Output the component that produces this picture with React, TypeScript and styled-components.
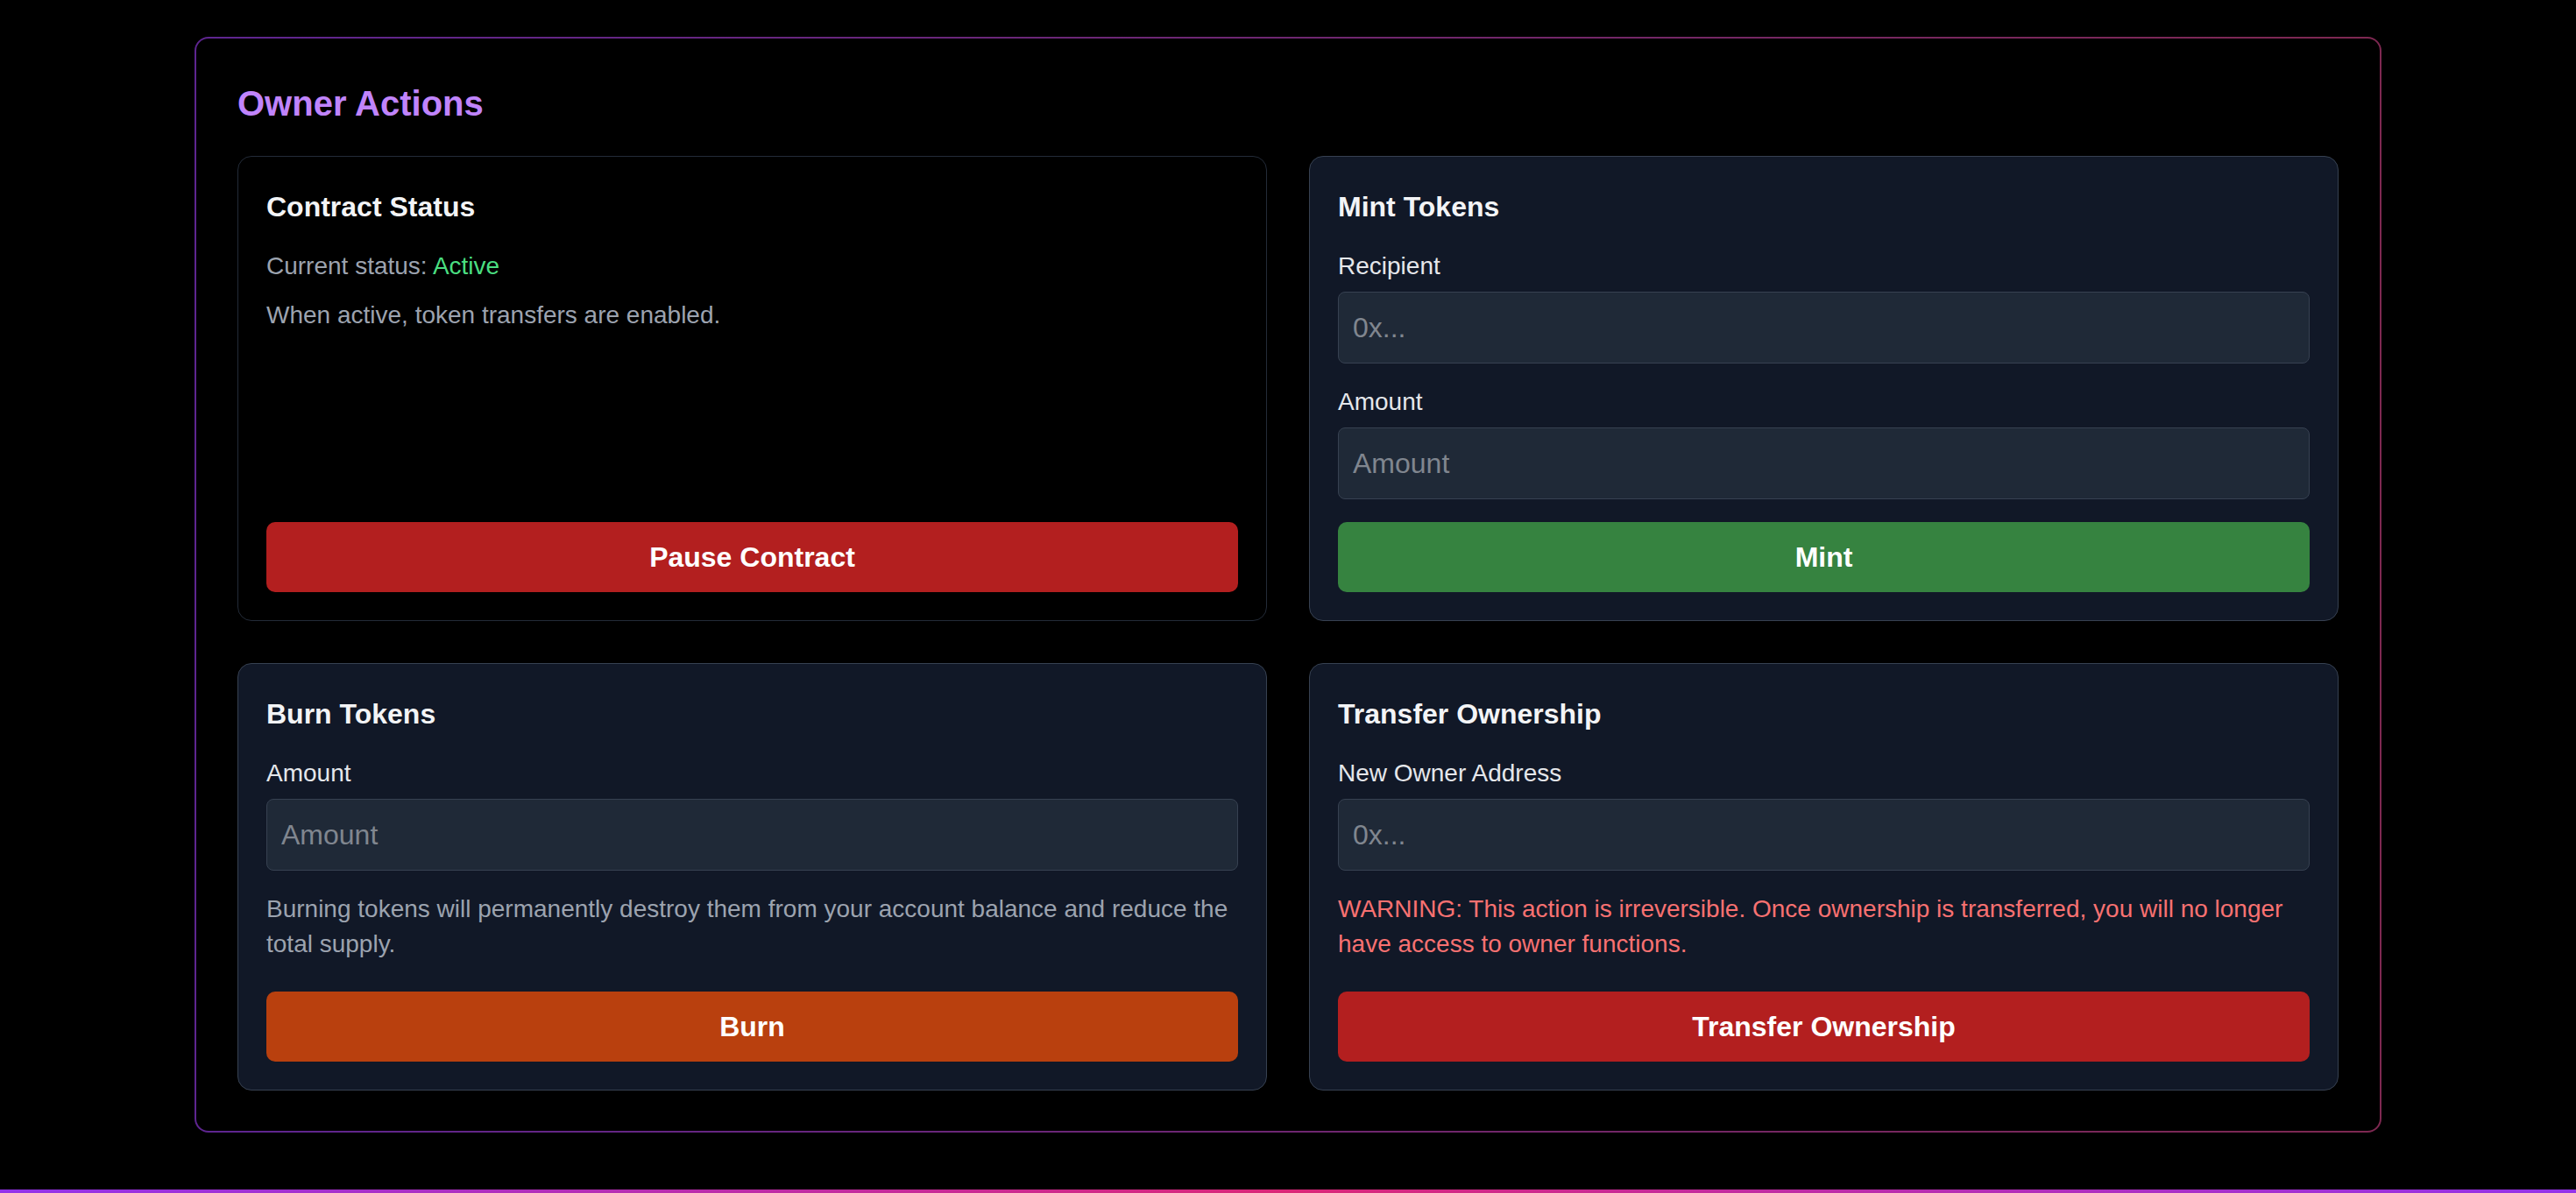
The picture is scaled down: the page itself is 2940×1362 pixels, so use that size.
import React from "react";
import styled, { createGlobalStyle } from "styled-components";

const GlobalStyle = createGlobalStyle`
  html, body {
    margin: 0;
    padding: 0;
    background: #000000;
  }
  body {
    font-family: "Liberation Sans", Arial, Helvetica, sans-serif;
    color: #f3f4f6;
  }
  * { box-sizing: border-box; }
`;

const Page = styled.div`
  min-height: 100vh;
  display: flex;
  flex-direction: column;
  background: #000000;
`;

const Main = styled.main`
  flex: 1;
  width: 100%;
  max-width: 2560px;
  margin: 0 auto;
  padding: 42px 32px 0;
`;

const Panel = styled.section`
  border: 2px solid transparent;
  border-radius: 16px;
  background:
    linear-gradient(#000000, #000000) padding-box,
    linear-gradient(to right, #5e2590, #7e2851) border-box;
  padding: 46px 47px 46px 47px;
`;

const PanelTitle = styled.h2`
  margin: 0 0 32px;
  font-size: 40px;
  line-height: 56px;
  font-weight: 700;
  color: #c084fc;
`;

const Grid = styled.div`
  display: grid;
  grid-template-columns: 1fr 1fr;
  gap: 48px;
`;

const Card = styled.div<{ $dark?: boolean }>`
  display: flex;
  flex-direction: column;
  border: 1px solid ${(p) => (p.$dark ? "#232b38" : "#374151")};
  background: ${(p) => (p.$dark ? "#000000" : "#111827")};
  border-radius: 16px;
  padding: 33px 32px 32px;
`;

const CardTitle = styled.h3`
  margin: 0 0 24px;
  font-size: 32px;
  line-height: 48px;
  font-weight: 700;
  color: #f3f4f6;
`;

const Text = styled.p<{ $tone?: "muted" | "warning"; $mb?: number }>`
  margin: 0 0 ${(p) => p.$mb ?? 0}px;
  font-size: 28px;
  line-height: 40px;
  color: ${(p) => (p.$tone === "warning" ? "#f87171" : "#9ca3af")};
`;

const Status = styled.span`
  color: #4ade80;
`;

const Field = styled.div`
  display: flex;
  flex-direction: column;
  margin-bottom: 24px;
`;

const Label = styled.label`
  font-size: 28px;
  line-height: 40px;
  color: #e5e7eb;
  margin-bottom: 9px;
`;

const Input = styled.input`
  width: 100%;
  height: 82px;
  padding: 0 16px;
  border: 1px solid #374151;
  border-radius: 8px;
  background: #1f2937;
  color: #ffffff;
  font-family: inherit;
  font-size: 32px;
  outline: none;
  &::placeholder {
    color: #80868f;
  }
`;

const Actions = styled.div`
  margin-top: auto;
  padding-top: 2px;
`;

const Button = styled.button<{ $color: string }>`
  display: block;
  width: 100%;
  height: 80px;
  border: none;
  border-radius: 10px;
  background: ${(p) => p.$color};
  color: #ffffff;
  font-family: inherit;
  font-size: 32px;
  font-weight: 700;
  cursor: pointer;
`;

const BottomBar = styled.div`
  height: 4px;
  flex-shrink: 0;
  background: linear-gradient(to right, #9333ea, #db2777, #9333ea);
`;

export default function App() {
  return (
    <Page>
      <GlobalStyle />
      <Main>
        <Panel>
          <PanelTitle>Owner Actions</PanelTitle>
          <Grid>
            <Card $dark>
              <CardTitle>Contract Status</CardTitle>
              <Text $mb={16}>
                Current status: <Status>Active</Status>
              </Text>
              <Text>When active, token transfers are enabled.</Text>
              <Actions>
                <Button $color="#b31f1f">Pause Contract</Button>
              </Actions>
            </Card>

            <Card>
              <CardTitle>Mint Tokens</CardTitle>
              <Field>
                <Label>Recipient</Label>
                <Input placeholder="0x..." />
              </Field>
              <Field>
                <Label>Amount</Label>
                <Input placeholder="Amount" />
              </Field>
              <Actions>
                <Button $color="#368340">Mint</Button>
              </Actions>
            </Card>

            <Card>
              <CardTitle>Burn Tokens</CardTitle>
              <Field>
                <Label>Amount</Label>
                <Input placeholder="Amount" />
              </Field>
              <Text $mb={32}>
                Burning tokens will permanently destroy them from your account balance and reduce the total supply.
              </Text>
              <Actions>
                <Button $color="#b9400e">Burn</Button>
              </Actions>
            </Card>

            <Card>
              <CardTitle>Transfer Ownership</CardTitle>
              <Field>
                <Label>New Owner Address</Label>
                <Input placeholder="0x..." />
              </Field>
              <Text $tone="warning" $mb={32}>
                WARNING: This action is irreversible. Once ownership is transferred, you will no longer have access to owner functions.
              </Text>
              <Actions>
                <Button $color="#b31f1f">Transfer Ownership</Button>
              </Actions>
            </Card>
          </Grid>
        </Panel>
      </Main>
      <BottomBar />
    </Page>
  );
}
